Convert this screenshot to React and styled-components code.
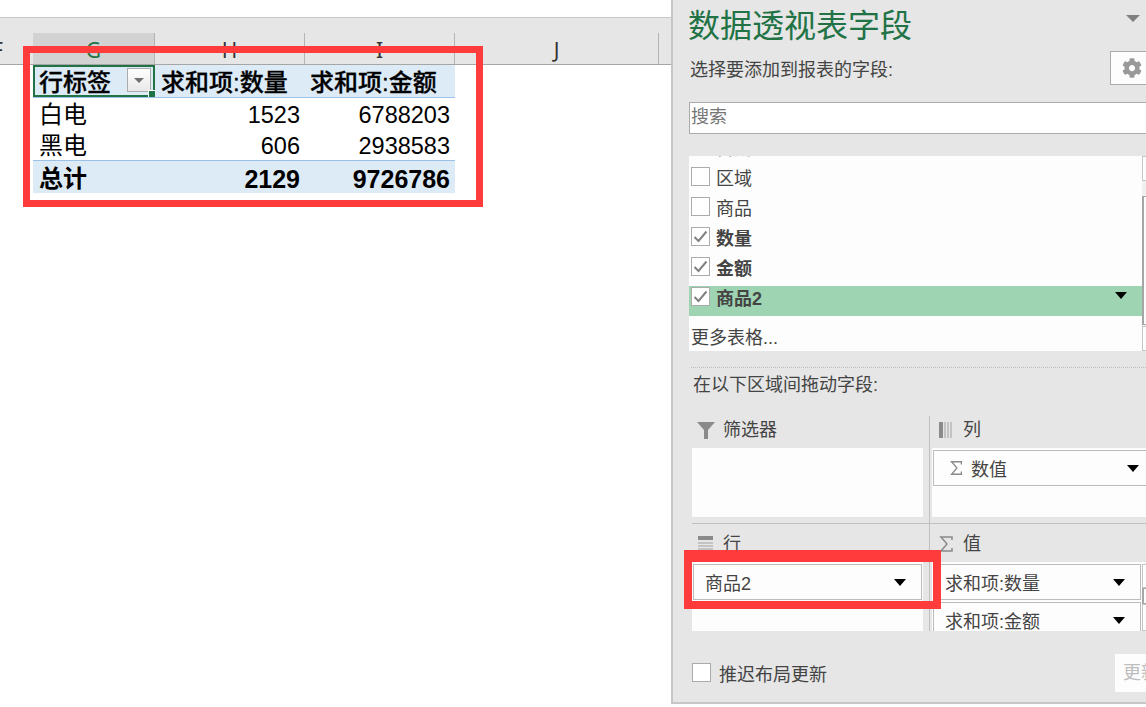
import React from 'react';
import styled, { createGlobalStyle } from 'styled-components';
import { FaCog } from 'react-icons/fa';

const FONT = '"Liberation Sans", "Noto Sans CJK SC", sans-serif';

const GlobalStyle = createGlobalStyle`
  html, body {
    margin: 0;
    padding: 0;
    background: #fff;
    font-family: ${FONT};
  }
  * {
    box-sizing: border-box;
  }
`;

const Page = styled.div`
  position: relative;
  display: flex;
  width: 1146px;
  height: 707px;
  overflow: hidden;
  background: #fff;
`;

const Sheet = styled.div`
  width: 671px;
  flex: none;
`;

const TopStrip = styled.div`
  height: 18px;
  border-bottom: 1px solid #c8c8c8;
`;

const ColumnBar = styled.div`
  display: flex;
  height: 47px;
  padding-top: 15px;
  background: #e6e6e6;
  border-bottom: 1px solid #a6a6a6;
`;

const ColumnHead = styled.div`
  display: flex;
  align-items: center;
  justify-content: ${p => (p.$clip ? 'flex-end' : 'center')};
  width: ${p => p.$width}px;
  padding-top: 3px;
  padding-right: ${p => (p.$clip ? '30px' : '0')};
  font-family: "Noto Sans", sans-serif;
  font-size: 21px;
  color: ${p => (p.$active ? '#217346' : '#333')};
  background: ${p => (p.$active ? '#d2d2d2' : 'transparent')};
  border-right: ${p => (p.$clip ? 'none' : '1px solid #b4b4b4')};
`;

const TableWrap = styled.div`
  padding-left: 33px;
`;

const PivotTable = styled.table`
  width: 422px;
  table-layout: fixed;
  border-collapse: collapse;
  font-size: 24px;
  color: #000;
`;

const Row = styled.tr`
  height: ${p => p.$height}px;
  background: ${p => (p.$fill ? '#ddebf7' : '#fff')};
  border-top: ${p => (p.$lined ? '1px solid #9bc2e6' : 'none')};
  border-bottom: ${p => (p.$underline ? '1px solid #9bc2e6' : 'none')};
`;

const Cell = styled.td`
  position: relative;
  padding: 4px ${p => p.$padRight}px 0 6px;
  text-align: ${p => (p.$num ? 'right' : 'left')};
  font-size: ${p => (p.$num ? (p.$bold ? '25px' : '23.5px') : '24px')};
  font-weight: ${p => (p.$bold ? 700 : 400)};
  white-space: nowrap;
  line-height: 26px;
`;

const HeadText = styled.span`
  font-weight: 500;
  -webkit-text-stroke: 0.3px #000;
`;

const Selection = styled.div`
  position: absolute;
  inset: 0 0 0 0;
  border: 2px solid #217346;
`;

const Handle = styled.div`
  position: absolute;
  right: -2px;
  bottom: -2px;
  width: 7px;
  height: 7px;
  background: #217346;
  border: 1px solid #fff;
  border-right: none;
  border-bottom: none;
`;

const FilterButton = styled.div`
  position: absolute;
  right: 2px;
  bottom: 3px;
  display: flex;
  align-items: center;
  justify-content: center;
  width: 24px;
  height: 24px;
  background: linear-gradient(#fff, #e8e8ea);
  border: 1px solid #ababab;
`;

const SmallCaret = styled.span`
  width: 0;
  height: 0;
  margin-top: 1px;
  border-left: 5px solid transparent;
  border-right: 5px solid transparent;
  border-top: 5px solid #707070;
`;

const Panel = styled.div`
  width: 475px;
  height: 704px;
  flex: none;
  padding-left: 16px;
  overflow: hidden;
  background: #e6e6e6;
  border-left: 2px solid #c6c6c6;
  border-bottom: 2px solid #c6c6c6;
  color: #444;
  font-size: 18px;
`;

const TitleRow = styled.div`
  display: flex;
  justify-content: space-between;
  height: 51px;
  padding-right: 6px;
`;

const Title = styled.div`
  margin-left: -1px;
  font-size: 32px;
  line-height: 52px;
  color: #217346;
`;

const PanelMenu = styled.span`
  width: 0;
  height: 0;
  margin-top: 15px;
  border-left: 7px solid transparent;
  border-right: 7px solid transparent;
  border-top: 7px solid #7f7f7f;
`;

const PickRow = styled.div`
  display: flex;
  align-items: center;
  justify-content: space-between;
  height: 34px;
  padding-left: 1px;
`;

const GearButton = styled.div`
  display: flex;
  align-items: center;
  justify-content: flex-start;
  width: 36px;
  height: 34px;
  padding-left: 11px;
  background: #fdfdfd;
  border: 1px solid #ababab;
  border-right: none;
  color: #999;
`;

const SearchBox = styled.div`
  height: 32px;
  margin-top: 17px;
  padding-left: 1px;
  line-height: 29px;
  color: #767676;
  background: #fff;
  border: 1px solid #ababab;
  border-right: none;
`;

const ListWrap = styled.div`
  display: flex;
  height: 195px;
  margin-top: 22px;
`;

const FieldList = styled.div`
  width: 453px;
  flex: none;
  overflow: hidden;
  background: #fdfdfd;
`;

const FieldRow = styled.div`
  display: flex;
  height: 30px;
  margin-top: ${p => (p.$first ? '-20px' : '0')};
  padding: 1px 15px 0 2px;
  background: ${p => (p.$selected ? '#9fd4b3' : 'transparent')};
  font-weight: ${p => (p.$on ? 700 : 400)};
  line-height: 24px;
`;

const CheckBox = styled.div`
  display: flex;
  align-items: center;
  justify-content: center;
  width: 19px;
  height: 19px;
  flex: none;
  background: #fff;
  border: 1px solid #ababab;
`;

const FieldName = styled.span`
  margin-left: 6px;
  flex: 1;
`;

const Caret = styled.span`
  flex: none;
  width: 0;
  height: 0;
  border-left: 6px solid transparent;
  border-right: 6px solid transparent;
  border-top: 7px solid #000;
`;

const RowCaret = styled(Caret)`
  margin-top: 5px;
`;

const MoreTables = styled.div`
  padding: 10px 0 0 2px;
  line-height: 24px;
`;

const ScrollStrip = styled.div`
  flex: 1;
  display: flex;
  flex-direction: column;
`;

const StripPart = styled.div`
  height: ${p => p.$height}px;
  flex: none;
  background: ${p => (p.$gap ? '#f0f0f0' : '#fff')};
  border: ${p => (p.$gap ? 'none' : `1px solid ${p.$dark ? '#a6a6a6' : '#c6c6c6'}`)};
  border-left-width: ${p => (p.$dark ? '2px' : '1px')};
  border-right: none;
`;

const DottedRule = styled.div`
  margin: 16px 0 0 2px;
  border-top: 1px dotted #bdbdbd;
`;

const AreasLabel = styled.div`
  padding-left: 4px;
  line-height: 35px;
`;

const Areas = styled.div`
  display: grid;
  grid-template-columns: 238px 1fr;
  grid-template-rows: 107px 108px;
  margin: 13px 0 0 3px;
  height: 215px;
`;

const Zone = styled.div`
  min-width: 0;
  padding: ${p => (p.$lower ? '6px' : '0')} ${p => (p.$left ? '6px' : '0')} 0 ${p => (p.$left ? '0' : '2px')};
  border-right: ${p => (p.$left ? '1px solid #c0c0c0' : 'none')};
  border-top: ${p => (p.$lower ? '1px solid #c0c0c0' : 'none')};
`;

const ZoneHead = styled.div`
  display: flex;
  align-items: center;
  height: 32px;
  padding: 0 0 4px ${p => (p.$left ? '5px' : '7px')};
  line-height: 26px;
`;

const ZoneIcon = styled.svg`
  flex: none;
  width: ${p => (p.$left ? '18px' : '15px')};
  height: 18px;
  margin-right: ${p => (p.$left ? '8px' : '9px')};
`;

const ZoneBox = styled.div`
  display: flex;
  height: 69px;
  overflow: hidden;
  background: #fdfdfd;
`;

const ItemColumn = styled.div`
  display: flex;
  flex-direction: column;
  gap: 2px;
  flex: none;
  padding: 2px 0 0 1px;
`;

const Item = styled.div`
  display: flex;
  align-items: center;
  justify-content: space-between;
  flex: none;
  width: ${p => p.$width}px;
  height: 36px;
  padding: 0 15px 0 ${p => (p.$sigma ? '15px' : '11px')};
  border: 1px solid #bcbcbc;
  background: #fdfdfd;
`;

const ItemLabel = styled.span`
  display: flex;
  align-items: center;
  white-space: nowrap;
  margin-top: -1px;
`;

const ItemSigma = styled.svg`
  width: 15px;
  height: 16px;
  margin-right: 7px;
`;

const ValueStrip = styled.div`
  flex: 1;
  display: flex;
  flex-direction: column;
  margin: 2px 0 0 1px;
`;

const Footer = styled.div`
  display: flex;
  align-items: center;
  justify-content: space-between;
  height: 71px;
  padding: 12px 0 0 3px;
`;

const DeferLabel = styled.label`
  display: flex;
  align-items: center;
  gap: 8px;
`;

const UpdateButton = styled.div`
  width: 31px;
  height: 38px;
  padding-left: 8px;
  overflow: hidden;
  white-space: nowrap;
  line-height: 38px;
  color: #bdbdbd;
  background: #fdfdfd;
`;

const RedFrame = styled.div`
  position: absolute;
  left: ${p => p.$left}px;
  top: ${p => p.$top}px;
  width: ${p => p.$width}px;
  height: ${p => p.$height}px;
  border: ${p => p.$thick}px solid #ff3b3b;
  border-top-width: ${p => p.$topThick}px;
`;

const Check = () => (
  <svg width="15" height="13" viewBox="0 0 15 13">
    <path d="M1.5 7 L5.5 11 L13.5 1.5" fill="none" stroke="#808080" strokeWidth="2" />
  </svg>
);

const Sigma = ({ color = '#8a8a8a' }) => (
  <path d="M1 2 H13 V5 M13 2 H2 L8 9 L2 16 H13 V13" fill="none" stroke={color} strokeWidth="1.5" />
);

const fields = [
  { name: '日期', first: true },
  { name: '区域' },
  { name: '商品' },
  { name: '数量', on: true },
  { name: '金额', on: true },
  { name: '商品2', on: true, selected: true },
];

const App = () => (
  <Page>
    <GlobalStyle />
    <Sheet>
      <TopStrip />
      <ColumnBar>
        <ColumnHead $width={33} $clip>F</ColumnHead>
        <ColumnHead $width={122} $active>G</ColumnHead>
        <ColumnHead $width={150}>H</ColumnHead>
        <ColumnHead $width={150}>I</ColumnHead>
        <ColumnHead $width={204}>J</ColumnHead>
      </ColumnBar>
      <TableWrap>
        <PivotTable>
          <colgroup>
            <col width="122" />
            <col width="149" />
            <col width="151" />
          </colgroup>
          <tbody>
            <Row $height={32} $fill $underline>
              <Cell $padRight={0}>
                <HeadText>行标签</HeadText>
                <Selection>
                  <FilterButton><SmallCaret /></FilterButton>
                  <Handle />
                </Selection>
              </Cell>
              <Cell $padRight={0}><HeadText>求和项:数量</HeadText></Cell>
              <Cell $padRight={0}><HeadText>求和项:金额</HeadText></Cell>
            </Row>
            <Row $height={32}>
              <Cell $padRight={0}>白电</Cell>
              <Cell $num $padRight={4}>1523</Cell>
              <Cell $num $padRight={5}>6788203</Cell>
            </Row>
            <Row $height={31}>
              <Cell $padRight={0}>黑电</Cell>
              <Cell $num $padRight={4}>606</Cell>
              <Cell $num $padRight={5}>2938583</Cell>
            </Row>
            <Row $height={33} $fill $lined>
              <Cell $bold $padRight={0}>总计</Cell>
              <Cell $num $bold $padRight={4}>2129</Cell>
              <Cell $num $bold $padRight={5}>9726786</Cell>
            </Row>
          </tbody>
        </PivotTable>
      </TableWrap>
    </Sheet>

    <Panel>
      <TitleRow>
        <Title>数据透视表字段</Title>
        <PanelMenu />
      </TitleRow>
      <PickRow>
        <span>选择要添加到报表的字段:</span>
        <GearButton><FaCog size={20} /></GearButton>
      </PickRow>
      <SearchBox>搜索</SearchBox>
      <ListWrap>
        <FieldList>
          {fields.map(f => (
            <FieldRow key={f.name} $first={f.first} $on={f.on} $selected={f.selected}>
              <CheckBox>{f.on && <Check />}</CheckBox>
              <FieldName>{f.name}</FieldName>
              {f.selected && <RowCaret />}
            </FieldRow>
          ))}
          <MoreTables>更多表格...</MoreTables>
        </FieldList>
        <ScrollStrip>
          <StripPart $height={25} />
          <StripPart $height={15} $gap />
          <StripPart $height={129} $dark />
          <StripPart $height={1} $gap />
          <StripPart $height={25} />
        </ScrollStrip>
      </ListWrap>
      <DottedRule />
      <AreasLabel>在以下区域间拖动字段:</AreasLabel>
      <Areas>
        <Zone $left>
          <ZoneHead $left>
            <ZoneIcon $left viewBox="0 0 18 18">
              <path d="M0 1 H18 L11 9 V18 H7 V9 Z" fill="#8a8a8a" />
            </ZoneIcon>
            筛选器
          </ZoneHead>
          <ZoneBox />
        </Zone>
        <Zone>
          <ZoneHead>
            <ZoneIcon viewBox="0 0 15 18">
              <path d="M0 1 H4 V17 H0 Z" fill="#8a8a8a" />
              <path d="M6 1 V17 M9 1 V17 M12 1 V17" stroke="#a0a0a0" strokeWidth="1" />
            </ZoneIcon>
            列
          </ZoneHead>
          <ZoneBox>
            <ItemColumn>
              <Item $width={222} $sigma>
                <ItemLabel>
                  <ItemSigma viewBox="0 0 15 18"><Sigma /></ItemSigma>
                  数值
                </ItemLabel>
                <Caret />
              </Item>
            </ItemColumn>
          </ZoneBox>
        </Zone>
        <Zone $left $lower>
          <ZoneHead $left>
            <ZoneIcon $left viewBox="0 0 18 18">
              <path d="M1 1 H16 V5 H1 Z" fill="#8a8a8a" />
              <path d="M1 8 H16 M1 11 H16 M1 14 H16" stroke="#a0a0a0" strokeWidth="1" />
            </ZoneIcon>
            行
          </ZoneHead>
          <ZoneBox>
            <ItemColumn>
              <Item $width={229}>
                <ItemLabel>商品2</ItemLabel>
                <Caret />
              </Item>
            </ItemColumn>
          </ZoneBox>
        </Zone>
        <Zone $lower>
          <ZoneHead>
            <ZoneIcon viewBox="0 0 15 18"><Sigma /></ZoneIcon>
            值
          </ZoneHead>
          <ZoneBox>
            <ItemColumn>
              <Item $width={208}>
                <ItemLabel>求和项:数量</ItemLabel>
                <Caret />
              </Item>
              <Item $width={208}>
                <ItemLabel>求和项:金额</ItemLabel>
                <Caret />
              </Item>
            </ItemColumn>
            <ValueStrip>
              <StripPart $height={24} />
              <StripPart $height={16} $dark />
              <StripPart $height={27} />
            </ValueStrip>
          </ZoneBox>
        </Zone>
      </Areas>
      <Footer>
        <DeferLabel>
          <CheckBox />
          推迟布局更新
        </DeferLabel>
        <UpdateButton>更新</UpdateButton>
      </Footer>
    </Panel>

    <RedFrame $left={23} $top={46} $width={460} $height={161} $thick={7} $topThick={7} />
    <RedFrame $left={684} $top={550} $width={257} $height={59} $thick={8} $topThick={12} />
  </Page>
);

export default App;
